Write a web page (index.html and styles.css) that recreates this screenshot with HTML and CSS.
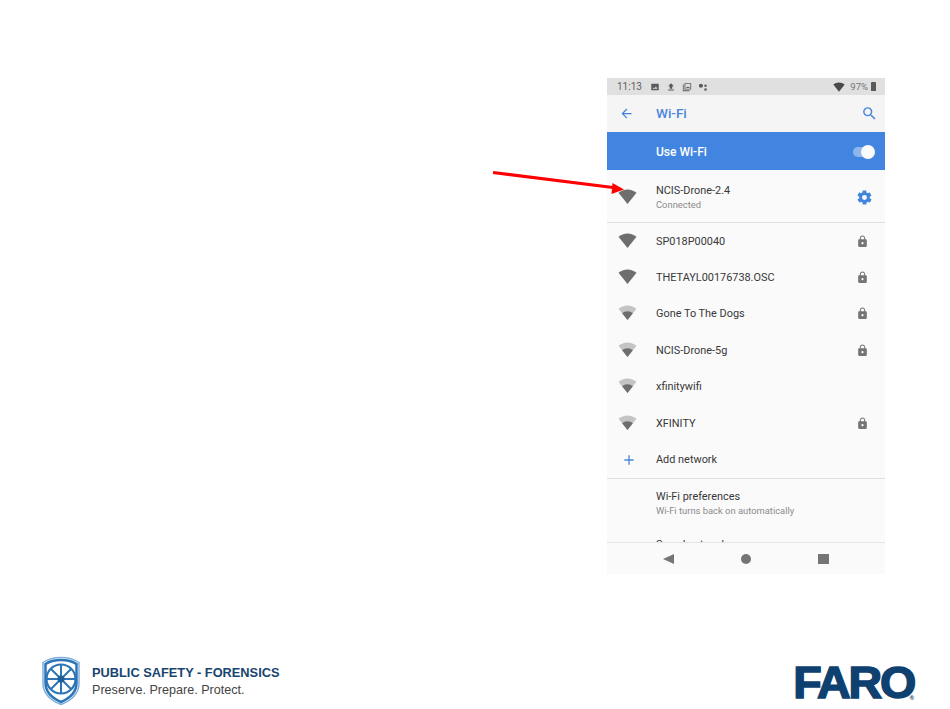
FILE: index.html
```html
<!DOCTYPE html>
<html lang="en">
<head>
    <meta charset="UTF-8">
    <title>Wi-Fi settings</title>
    <link rel="stylesheet" href="styles.css">
</head>
<body>
    <svg width="0" height="0" class="defs">
        <defs>
            <path id="fan" d="M12 21.5 .6 7.2C3.7 4.6 7.7 3 12 3s8.3 1.6 11.4 4.2z"/>
            <path id="fan-low" d="M12 21.5 5.2 13C7 11.4 9.4 10.500 12 10.500s5 .9 6.800 2.500z"/>
            <path id="lock" d="M18 8h-1V6c0-2.800-2.200-5-5-5S7 3.200 7 6v2H6c-1.100 0-2 .9-2 2v10c0 1.100.9 2 2 2h12c1.100 0 2-.9 2-2V10c0-1.100-.9-2-2-2zm-6 9c-1.100 0-2-.9-2-2s.9-2 2-2 2 .9 2 2-.9 2-2 2zm3.100-9H8.900V6c0-1.700 1.400-3.100 3.100-3.100s3.100 1.400 3.100 3.100z"/>
        </defs>
    </svg>

    <div class="slide">
        <div class="stage">
            <div class="phone">
                <div class="status-bar">
                    <span class="clock">11:13</span>
                    <svg class="status-icon" viewBox="0 0 24 24"><path d="M3 4h18v16H3zM6 16h12l-4-5-3 4-2-2z" fill-rule="evenodd"/></svg>
                    <svg class="status-icon" viewBox="0 0 24 24"><path d="M9 16V10H5l7-7 7 7h-4v6zM5 18h14v2.500H5z"/></svg>
                    <svg class="status-icon" viewBox="0 0 24 24"><path d="M6 3h16v15H6zM8 5v11h12V5zM9.500 14.500l3-4 2 2.500 1.500-2 3 3.500zM2 6h2v14h14v2H2z" fill-rule="evenodd"/></svg>
                    <svg class="status-icon" viewBox="0 0 24 24"><circle cx="7" cy="9" r="5"/><circle cx="18" cy="9" r="3"/><circle cx="18" cy="18" r="3"/></svg>
                    <span class="status-right">
                        <svg class="status-wifi" viewBox="0 0 24 24"><use href="#fan"/></svg>
                        <span class="battery-text">97%</span>
                        <span class="battery"></span>
                    </span>
                </div>

                <div class="toolbar">
                    <svg class="back-icon" viewBox="0 0 24 24"><path d="M20 11H7.800l5.600-5.600L12 4l-8 8 8 8 1.400-1.400L7.800 13H20z"/></svg>
                    <span class="toolbar-title">Wi-Fi</span>
                    <svg class="search-icon" viewBox="0 0 24 24"><path d="M15.500 14h-.79l-.28-.27A6.470 6.470 0 0 0 16 9.500 6.500 6.500 0 1 0 9.500 16c1.610 0 3.090-.59 4.230-1.570l.27.28v.79l5 4.990L20.490 19zm-6 0C7.010 14 5 11.990 5 9.500S7.010 5 9.500 5 14 7.010 14 9.500 11.990 14 9.500 14z"/></svg>
                </div>

                <div class="master-bar">
                    <span class="master-label">Use Wi-Fi</span>
                    <span class="toggle"><span class="knob"></span></span>
                </div>

                <div class="list">
                    <div class="row row-connected">
                        <svg class="wifi" viewBox="0 0 24 24"><use href="#fan"/></svg>
                        <div class="row-text">
                            <div class="name">NCIS-Drone-2.4</div>
                            <div class="sub">Connected</div>
                        </div>
                        <svg class="gear" viewBox="0 0 24 24"><path d="M19.400 13c0-.3.100-.6.100-1s0-.7-.1-1l2.100-1.600c.2-.2.200-.4.100-.6l-2-3.500c-.1-.2-.4-.3-.6-.2l-2.500 1c-.5-.4-1.100-.7-1.700-1l-.4-2.600c0-.3-.2-.5-.5-.5h-4c-.3 0-.5.200-.5.500l-.4 2.600c-.6.300-1.200.6-1.700 1l-2.500-1c-.2-.1-.5 0-.6.200l-2 3.500c-.1.200-.1.400.1.600L4.600 11c0 .3-.1.700-.1 1s0 .7.100 1l-2.100 1.600c-.2.200-.2.400-.1.600l2 3.500c.1.200.4.300.6.200l2.500-1c.5.400 1.100.7 1.700 1l.4 2.600c0 .3.200.5.500.5h4c.3 0 .5-.2.500-.5l.4-2.600c.6-.3 1.200-.6 1.700-1l2.500 1c.2.100.5 0 .6-.2l2-3.500c.1-.2.100-.4-.1-.6zM12 15.500a3.500 3.500 0 1 1 0-7 3.500 3.500 0 0 1 0 7z"/></svg>
                    </div>

                    <div class="networks">
                        <div class="row">
                            <svg class="wifi" viewBox="0 0 24 24"><use href="#fan"/></svg>
                            <div class="name">SP018P00040</div>
                            <svg class="lock" viewBox="0 0 24 24"><use href="#lock"/></svg>
                        </div>
                        <div class="row">
                            <svg class="wifi" viewBox="0 0 24 24"><use href="#fan"/></svg>
                            <div class="name">THETAYL00176738.OSC</div>
                            <svg class="lock" viewBox="0 0 24 24"><use href="#lock"/></svg>
                        </div>
                        <div class="row">
                            <svg class="wifi weak" viewBox="0 0 24 24"><use href="#fan"/><use class="fan-low" href="#fan-low"/></svg>
                            <div class="name">Gone To The Dogs</div>
                            <svg class="lock" viewBox="0 0 24 24"><use href="#lock"/></svg>
                        </div>
                        <div class="row">
                            <svg class="wifi weak" viewBox="0 0 24 24"><use href="#fan"/><use class="fan-low" href="#fan-low"/></svg>
                            <div class="name">NCIS-Drone-5g</div>
                            <svg class="lock" viewBox="0 0 24 24"><use href="#lock"/></svg>
                        </div>
                        <div class="row">
                            <svg class="wifi weak" viewBox="0 0 24 24"><use href="#fan"/><use class="fan-low" href="#fan-low"/></svg>
                            <div class="name">xfinitywifi</div>
                        </div>
                        <div class="row">
                            <svg class="wifi weak" viewBox="0 0 24 24"><use href="#fan"/><use class="fan-low" href="#fan-low"/></svg>
                            <div class="name">XFINITY</div>
                            <svg class="lock" viewBox="0 0 24 24"><use href="#lock"/></svg>
                        </div>
                        <div class="row">
                            <svg class="plus" viewBox="0 0 24 24"><path d="M19 13h-6v6h-2v-6H5v-2h6V5h2v6h6z"/></svg>
                            <div class="name">Add network</div>
                        </div>
                    </div>

                    <div class="row row-prefs">
                        <div class="row-text">
                            <div class="name">Wi-Fi preferences</div>
                            <div class="sub">Wi-Fi turns back on automatically</div>
                        </div>
                    </div>
                    <div class="row row-saved">
                        <div class="name">Saved networks</div>
                    </div>
                </div>

                <div class="nav-bar">
                    <span class="nav-back"></span>
                    <span class="nav-home"></span>
                    <span class="nav-recent"></span>
                </div>
            </div>
        </div>

        <div class="footer">
            <div class="brand">
                <svg class="shield" viewBox="0 0 38 50">
                    <path d="M19 1.500C26 1.500 32 3 37 6.500V27C37 38 28 45 19 48.500 10 45 1 38 1 27V6.500C6 3 12 1.500 19 1.500z" fill="#fff" stroke="#7fb0dc" stroke-width="1.500"/>
                    <path d="M19 4C25.500 4 30.500 5.300 34.500 8V27C34.500 36.500 27 42.500 19 46 11 42.500 3.500 36.500 3.500 27V8C7.500 5.300 12.500 4 19 4z" fill="none" stroke="#2e75b6" stroke-width="2.500"/>
                    <circle cx="19" cy="23" r="14.500" fill="none" stroke="#2e75b6" stroke-width="2.200"/>
                    <g stroke="#2e75b6" stroke-width="2">
                        <path d="M19 23V8M19 23V38M19 23H4M19 23H34M19 23 8.500 12.500M19 23 29.500 12.500M19 23 8.500 33.500M19 23 29.500 33.500"/>
                    </g>
                    <circle cx="19" cy="23" r="3.500" fill="#1f5f99"/>
                </svg>
                <div class="brand-text">
                    <div class="brand-title">PUBLIC SAFETY - FORENSICS</div>
                    <div class="brand-tag">Preserve. Prepare. Protect.</div>
                </div>
            </div>
            <div class="faro">FARO<span class="faro-mark">®</span></div>
        </div>

        <svg class="arrow" viewBox="0 0 950 709">
            <path d="M493 172.500 613 187.500" stroke="#f00" stroke-width="3"/>
            <path d="M624 189.500 612.500 183 611.500 194z" fill="#f00"/>
        </svg>
    </div>
</body>
</html>
```

FILE: styles.css
```css
body {
    margin: 0;
    background-color: white;
    font-family: 'Roboto', sans-serif;
}
.defs {
    position: absolute;
}
.slide {
    position: relative;
    width: 950px;
    height: 709px;
    overflow: hidden;
    display: flex;
    flex-direction: column;
}
.stage {
    display: flex;
    justify-content: flex-end;
    padding: 78px 65px 0 0;
}
.phone {
    width: 278px;
    height: 496px;
    display: flex;
    flex-direction: column;
    background-color: #fafafa;
}

/* status bar */
.status-bar {
    height: 17px;
    flex: none;
    display: flex;
    align-items: center;
    gap: 6px;
    padding: 0 9px 0 10px;
    background-color: #e0e0e0;
    color: #616161;
    font-size: 10px;
}
.clock {
    margin-right: 2px;
}
.status-icon {
    width: 10px;
    height: 10px;
    fill: #5a5a5a;
}
.status-right {
    margin-left: auto;
    display: flex;
    align-items: center;
    gap: 5px;
}
.status-wifi {
    width: 12px;
    height: 12px;
    fill: #4a4a4a;
}
.battery-text {
    font-size: 9.5px;
    color: #757575;
}
.battery {
    width: 5px;
    height: 9px;
    margin-left: -2px;
    background-color: #5a5a5a;
    border-radius: 1px 1px 0 0;
}

/* toolbar */
.toolbar {
    height: 37px;
    flex: none;
    display: flex;
    align-items: center;
    padding: 0 7px 0 12px;
    background-color: #f5f5f5;
}
.back-icon {
    width: 15px;
    height: 15px;
    fill: #4285dc;
    margin-right: 22px;
}
.toolbar-title {
    font-size: 13.500px;
    font-weight: 500;
    color: #4a86dd;
    margin-bottom: 1px;
}
.search-icon {
    width: 17px;
    height: 17px;
    margin-left: auto;
    fill: #4285dc;
}

.master-bar {
    height: 38px;
    flex: none;
    box-sizing: border-box;
    display: flex;
    align-items: center;
    justify-content: space-between;
    padding: 1px 11px 0 49px;
    background-color: #4285e0;
    color: white;
    font-size: 12px;
    font-weight: 500;
}
.toggle {
    position: relative;
    width: 21px;
    height: 10px;
    border-radius: 5px;
    background-color: #8fb6ec;
}
.knob {
    position: absolute;
    right: -1px;
    top: -2px;
    width: 14px;
    height: 14px;
    border-radius: 50%;
    background-color: #fafafa;
}

/* list */
.list {
    flex: 1;
    min-height: 0;
    overflow: hidden;
    margin-top: 1px;
}
.row {
    height: 36.400px;
    display: flex;
    align-items: center;
    padding-left: 11px;
}
.row-connected {
    height: 51px;
    border-bottom: 1px solid #e0e0e0;
}
.row-connected .row-text, .row-connected .gear {
    margin-top: 1px;
}
.networks {
    border-bottom: 1px solid #e0e0e0;
}
.networks .wifi {
    margin-bottom: 2px;
}
.row-prefs {
    height: 62px;
    box-sizing: border-box;
    align-items: flex-start;
    padding: 11px 0 0 49px;
}
.row-saved {
    padding-left: 49px;
    height: 20px;
    align-items: flex-start;
    margin-top: -3px;
}
.name {
    font-size: 10.900px;
    color: #383838;
}
.sub {
    font-size: 9.400px;
    color: #8a8a8a;
    margin-top: 2px;
}
.wifi {
    width: 19px;
    height: 19px;
    margin-right: 19px;
    fill: #6e6e6e;
    flex: none;
}
.wifi.weak {
    fill: #c4c4c4;
}
.fan-low {
    fill: #6e6e6e;
}
.lock {
    width: 13px;
    height: 13px;
    margin-left: auto;
    margin-right: 16px;
    fill: #757575;
}
.gear {
    width: 17px;
    height: 17px;
    margin-left: auto;
    margin-right: 12px;
    fill: #4285dc;
}
.plus {
    width: 16px;
    height: 16px;
    margin: 0 19px 0 3px;
    fill: #4a86dd;
}

/* nav bar */
.nav-bar {
    position: relative;
    height: 32px;
    flex: none;
    display: flex;
    align-items: center;
    justify-content: space-between;
    padding: 0 56px;
    background-color: #fafafa;
    border-top: 1px solid #e4e4e4;
    box-sizing: border-box;
}
.nav-back {
    width: 0;
    height: 0;
    border-top: 5.500px solid transparent;
    border-bottom: 5.500px solid transparent;
    border-right: 11px solid #757575;
}
.nav-home {
    width: 10px;
    height: 10px;
    border-radius: 50%;
    background-color: #757575;
}
.nav-recent {
    width: 11px;
    height: 10px;
    background-color: #757575;
}

/* footer */
.footer {
    margin-top: 82px;
    display: flex;
    justify-content: space-between;
    align-items: center;
    padding: 0 36px 0 42px;
}
.brand {
    display: flex;
    align-items: center;
    gap: 12px;
}
.shield {
    width: 38px;
    height: 50px;
}
.brand-title {
    font-family: 'Liberation Sans', sans-serif;
    font-size: 12.800px;
    font-weight: bold;
    color: #17456f;
}
.brand-tag {
    font-family: 'Liberation Sans', sans-serif;
    font-size: 12.600px;
    color: #444;
    margin-top: 3px;
}
.faro {
    font-family: 'Liberation Sans', sans-serif;
    font-size: 44px;
    line-height: 46px;
    font-weight: bold;
    letter-spacing: -2px;
    color: #0f4170;
    -webkit-text-stroke: 1.500px #0f4170;
    position: relative;
    margin-top: 4px;
    transform: scaleX(1.060);
    transform-origin: right center;
}
.faro-mark {
    position: absolute;
    right: 0;
    bottom: 5px;
    font-size: 6px;
    line-height: 6px;
    letter-spacing: 0;
    -webkit-text-stroke: 0;
}

.arrow {
    position: absolute;
    left: 0;
    top: 0;
    width: 950px;
    height: 709px;
    pointer-events: none;
}
```
